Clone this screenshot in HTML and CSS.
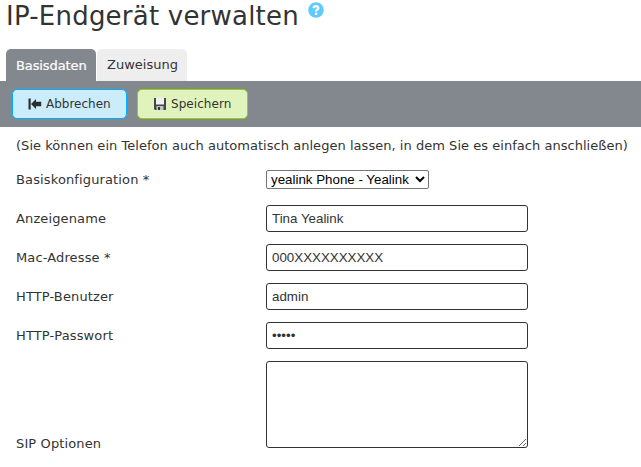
FILE: index.html
```html
<!DOCTYPE html>
<html lang="de">
<head>
<meta charset="utf-8">
<title>IP-Endgerät verwalten</title>
<link rel="stylesheet" href="styles.css">
</head>
<body>
<header class="page-head">
  <h1>IP-Endgerät verwalten</h1>
  <svg class="help" viewBox="0 0 16 16"><circle cx="8" cy="8" r="7.8" fill="#5fcbfd"/><path d="M5.6 6.2C5.8 3.6 10.4 3.5 10.3 6.1C10.2 7.7 8 7.7 8 9.6" fill="none" stroke="#fff" stroke-width="2.2"/><rect x="6.9" y="10.7" width="2.3" height="2.2" fill="#fff"/></svg>
</header>
<nav class="tabs">
  <a class="tab active"><span>Basisdaten</span></a>
  <a class="tab"><span>Zuweisung</span></a>
</nav>
<div class="toolbar">
  <button class="btn cancel"><svg class="icon" viewBox="0 0 14 14"><path d="M.5 1.5h2.2v11H.5zM3 7L8 2V4.8h5.2v4.4H8V12z" fill="#2b2e30"/></svg><span>Abbrechen</span></button>
  <button class="btn save"><svg class="icon" viewBox="0 0 14 14"><path d="M1 1h12v12H2L1 12z" fill="#444749"/><path d="M3 1h8v6.5H3z" fill="#eef0f1"/><path d="M3.5 9h7v4h-7z" fill="#bfc3c6"/><path d="M5 10h2v3H5z" fill="#333638"/></svg><span>Speichern</span></button>
</div>
<form class="form">
  <p class="hint"><span>(Sie können ein Telefon auch automatisch anlegen lassen, in dem Sie es einfach anschließen)</span></p>
  <div class="row"><label>Basiskonfiguration *</label><select><option>yealink Phone - Yealink</option></select></div>
  <div class="row"><label>Anzeigename</label><input type="text" value="Tina Yealink"></div>
  <div class="row"><label>Mac-Adresse *</label><input type="text" value="000XXXXXXXXXX"></div>
  <div class="row"><label>HTTP-Benutzer</label><input type="text" value="admin"></div>
  <div class="row"><label>HTTP-Passwort</label><input type="password" value="admin"></div>
  <div class="row tall"><label>SIP Optionen</label><textarea></textarea></div>
</form>
</body>
</html>
```
FILE: styles.css
```css
* { box-sizing: border-box; }
body { margin: 0; height: 467px; overflow: hidden; background: #fff; color: #333; font: 13px/16px Verdana, "DejaVu Sans", sans-serif; }
.page-head { display: flex; align-items: flex-start; height: 49px; padding-left: 6px; }
h1 { margin: 0; width: 302px; font-size: 26px; line-height: 32px; font-weight: 400; letter-spacing: .22px; white-space: nowrap; }
.help { width: 16px; height: 16px; margin-top: 2px; }
.tabs { display: flex; gap: 1px; height: 32px; padding-left: 6px; }
.tab { width: 90px; padding: 8px 0 0 10px; border-radius: 5px 5px 0 0; background: #eee; white-space: nowrap; }
.tab.active { padding-top: 9px; background: #82888d; color: #fff; letter-spacing: -.1px; -webkit-text-stroke: .2px #fff; }
.toolbar { display: flex; gap: 10px; height: 46px; padding: 8px 12px; background: #82888d; }
.btn { display: flex; align-items: center; gap: 4px; height: 30px; padding: 0 0 0 15px; border: 1px solid; border-radius: 5px; color: #333; font: inherit; font-size: 12px; white-space: nowrap; }
.cancel { width: 115px; background: #cbecfb; border-color: #00aeff; }
.save { width: 111px; background: #e1f3bd; border-color: #94cf12; }
.save span { letter-spacing: .06px; }
.icon { width: 14px; height: 14px; }
.form { padding: 11px 0 0 16px; }
.hint { margin: 0 0 6px; letter-spacing: .035px; white-space: nowrap; }
.row { display: flex; align-items: center; height: 39px; }
.row label { width: 250px; letter-spacing: .13px; }
select { width: 163px; height: 19px; padding: 0; border: 1px solid #767676; border-radius: 2px; background: #fff; color: #000; font: 13.333px "Liberation Sans", sans-serif; }
input, textarea { width: 262px; height: 27px; margin: 0; padding: 0 5px; border: 1px solid #333; border-radius: 3px; color: #333; background: #fff; font: 13.333px "Liberation Sans", sans-serif; }
.tall { align-items: flex-end; height: 87px; margin-top: 6px; }
.tall textarea { height: 87px; }
.tall label { margin-bottom: -4px; }
```
